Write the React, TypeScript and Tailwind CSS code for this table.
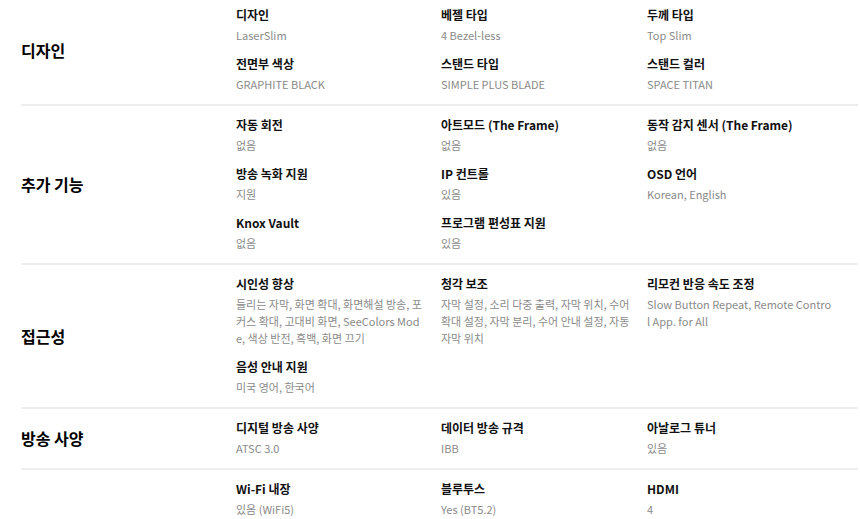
type Spec = { label: string; value: string[] };
type Section = { title: string; specs: Spec[] };

const v = (...lines: string[]) => lines;

const SECTIONS: Section[] = [
  {
    title: '디자인',
    specs: [
      { label: '디자인', value: v('LaserSlim') },
      { label: '베젤 타입', value: v('4 Bezel-less') },
      { label: '두께 타입', value: v('Top Slim') },
      { label: '전면부 색상', value: v('GRAPHITE BLACK') },
      { label: '스탠드 타입', value: v('SIMPLE PLUS BLADE') },
      { label: '스탠드 컬러', value: v('SPACE TITAN') },
    ],
  },
  {
    title: '추가 기능',
    specs: [
      { label: '자동 회전', value: v('없음') },
      { label: '아트모드 (The Frame)', value: v('없음') },
      { label: '동작 감지 센서 (The Frame)', value: v('없음') },
      { label: '방송 녹화 지원', value: v('지원') },
      { label: 'IP 컨트롤', value: v('있음') },
      { label: 'OSD 언어', value: v('Korean, English') },
      { label: 'Knox Vault', value: v('없음') },
      { label: '프로그램 편성표 지원', value: v('있음') },
    ],
  },
  {
    title: '접근성',
    specs: [
      {
        label: '시인성 향상',
        value: v('들리는 자막, 화면 확대, 화면해설 방송, 포', '커스 확대, 고대비 화면, SeeColors Mod', 'e, 색상 반전, 흑백, 화면 끄기'),
      },
      {
        label: '청각 보조',
        value: v('자막 설정, 소리 다중 출력, 자막 위치, 수어', '확대 설정, 자막 분리, 수어 안내 설정, 자동', '자막 위치'),
      },
      { label: '리모컨 반응 속도 조정', value: v('Slow Button Repeat, Remote Contro', 'l App. for All') },
      { label: '음성 안내 지원', value: v('미국 영어, 한국어') },
    ],
  },
  {
    title: '방송 사양',
    specs: [
      { label: '디지털 방송 사양', value: v('ATSC 3.0') },
      { label: '데이터 방송 규격', value: v('IBB') },
      { label: '아날로그 튜너', value: v('있음') },
    ],
  },
  {
    title: '',
    specs: [
      { label: 'Wi-Fi 내장', value: v('있음 (WiFi5)') },
      { label: '블루투스', value: v('Yes (BT5.2)') },
      { label: 'HDMI', value: v('4') },
    ],
  },
];

function SpecItem({ spec }: { spec: Spec }) {
  return (
    <div>
      <p className="text-[12px] leading-[18px] font-bold text-[#111]">{spec.label}</p>
      <p className="mt-[3px] text-[11px] leading-[17px] text-[#8a8a8a]">
        {spec.value.map((line, i) => (
          <span key={i} className="block whitespace-nowrap">{line}</span>
        ))}
      </p>
    </div>
  );
}

export default function App() {
  return (
    <div className="bg-white w-[860px] pl-[21px] pr-[2px]" style={{ fontFamily: '"Noto Sans CJK KR", "Noto Sans", sans-serif' }}>
      {SECTIONS.map((s, i) => (
        <div
          key={i}
          className={`flex items-center ${i === 0 ? 'pt-[6px] pb-[11px]' : 'border-t-2 border-[#eeeeee] pt-[10px] pb-[11px]'}`}
        >
          <h3 className="w-[215px] shrink-0 text-[16px] font-bold text-black">{s.title}</h3>
          <div className="grid grid-cols-[205px_206px_1fr] gap-y-[11px] flex-1">
            {s.specs.map((sp) => (
              <SpecItem key={sp.label} spec={sp} />
            ))}
          </div>
        </div>
      ))}
    </div>
  );
}
